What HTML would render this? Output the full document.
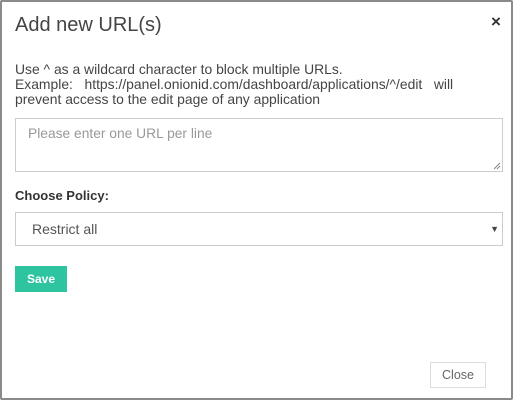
<!DOCTYPE html>
<html><head><style>
*{box-sizing:border-box;margin:0;padding:0}
body{width:513px;height:400px;overflow:hidden;background:#fff;font-family:"Liberation Sans",sans-serif;color:#444}
.frame{position:absolute;left:0;top:0;width:513px;height:400px;border:2px solid #8a8a8a;border-radius:2px}
.abs{position:absolute}
</style></head><body>
<div class="frame"></div>
<div class="abs" style="left:15px;top:14px;font-size:20px;color:#444">Add new URL(s)</div>
<div class="abs" style="left:491px;top:12px;font-size:17px;font-weight:bold;color:#333">×</div>
<div class="abs" style="left:15px;top:62px;font-size:13.9px;line-height:15px;color:#444;width:490px;white-space:nowrap">Use ^ as a wildcard character to block multiple URLs.<br>Example: &nbsp;&nbsp;https://panel.onionid.com/dashboard/applications/^/edit &nbsp;&nbsp;will<br>prevent access to the edit page of any application</div>
<div class="abs" style="left:15px;top:118px;width:488px;height:54px;border:1px solid #ccc;font-size:13.8px;color:#999;padding:7px 12px">Please enter one URL per line<svg style="position:absolute;right:1px;bottom:1px" width="8" height="8"><path d="M7 1L1 7M7 4L4 7" stroke="#888" stroke-width="1"/></svg></div>
<div class="abs" style="left:15px;top:188px;font-size:13px;font-weight:bold;color:#333">Choose Policy:</div>
<div class="abs" style="left:15px;top:212px;width:488px;height:34px;border:1px solid #ccc;font-size:14px;color:#555;padding:8px 16px">Restrict all<span style="position:absolute;right:3px;top:11px;font-size:9px;color:#444">▼</span></div>
<div class="abs" style="left:15px;top:266px;width:52px;height:26px;background:#2ec4a0;color:#fff;font-size:12px;font-weight:bold;text-align:center;line-height:26px">Save</div>
<div class="abs" style="left:430px;top:362px;width:56px;height:26px;border:1px solid #ddd;color:#666;font-size:12.5px;text-align:center;line-height:24px">Close</div>
</body></html>
